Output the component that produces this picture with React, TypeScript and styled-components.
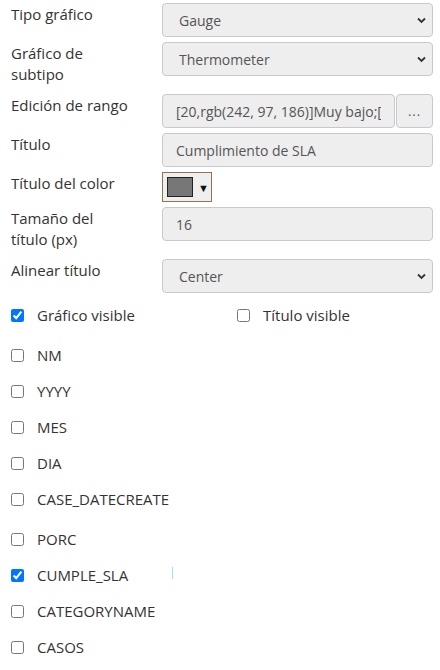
import { createGlobalStyle } from 'styled-components';
import styled from 'styled-components';

const GlobalStyle = createGlobalStyle`
  html, body {
    margin: 0;
    padding: 0;
    background: #fff;
  }
  body {
    font-family: 'Open Sans', 'Noto Sans', sans-serif;
    font-size: 15px;
    color: #333;
  }
  * { box-sizing: border-box; }
`;

const Panel = styled.div`
  width: 440px;
  padding: 3px 7px 0 11px;
`;

const Row = styled.div`
  display: flex;
  align-items: flex-start;
`;

const Label = styled.div`
  width: 151px;
  flex-shrink: 0;
  font-size: 15px;
  line-height: 21px;
  padding: 1px 30px 9px 0;
  color: #333;
`;

const Control = styled.div`
  flex: 1;
  display: flex;
  padding-bottom: 5px;
`;

const fieldBase = `
  height: 34px;
  border: 1px solid #c6cacd;
  border-radius: 4px;
  background: #eee;
  font-family: 'Open Sans', 'Noto Sans', sans-serif;
  font-size: 14px;
  color: #555;
  outline: none;
`;

const SelectWrap = styled.div`
  position: relative;
  flex: 1;
`;

const Select = styled.select`
  ${fieldBase}
  width: 100%;
  appearance: none;
  padding: 0 30px 0 16px;
`;

const Chevron = styled.svg`
  position: absolute;
  right: 7px;
  top: 14px;
  width: 9px;
  height: 7px;
  pointer-events: none;
`;

const TextInput = styled.input<{ $joined?: boolean }>`
  ${fieldBase}
  flex: 1;
  min-width: 0;
  padding: 0 13px;
  margin-right: ${(p) => (p.$joined ? '1px' : '0')};
`;

const DotsButton = styled.button`
  ${fieldBase}
  width: 37px;
  padding: 0;
  color: #555;
  font-size: 13px;
  letter-spacing: 1px;
`;

const ColorPicker = styled.div`
  width: 50px;
  height: 30px;
  border: 1px solid #94714f;
  background: #efefef;
  display: flex;
  align-items: center;
  padding-left: 4px;
  gap: 5px;
`;

const Swatch = styled.div<{ $color: string }>`
  width: 26px;
  height: 20px;
  border: 1px solid #222;
  background: ${(p) => p.$color};
`;

const Arrow = styled.span`
  font-size: 11px;
  color: #111;
  line-height: 1;
`;

const CheckGrid = styled.div`
  display: grid;
  grid-template-columns: 226px 1fr;
  padding-top: 4px;
  margin-bottom: 14px;
`;

const CheckItem = styled.label`
  position: relative;
  display: flex;
  align-items: center;
  height: 26px;
  font-size: 15px;
  color: #333;
`;

const Box = styled.input`
  width: 13px;
  height: 13px;
  margin: 0 13px 0 0;
  accent-color: #0075ff;
`;

const Group = styled.div`
  display: flex;
  flex-direction: column;
  gap: 10px;
  margin-bottom: 14px;
`;

const Caret = styled.span`
  position: absolute;
  left: 161px;
  top: 5px;
  width: 1px;
  height: 12px;
  background: #a6dcff;
`;

function Dropdown({ value, options }: { value: string; options: string[] }) {
  return (
    <SelectWrap>
      <Select defaultValue={value}>
        {options.map((o) => (
          <option key={o}>{o}</option>
        ))}
      </Select>
      <Chevron viewBox="0 0 9 7">
        <path d="M1 1.5 L4.5 5 L8 1.5" fill="none" stroke="#333" strokeWidth="1.8" />
      </Chevron>
    </SelectWrap>
  );
}

const fieldsA = ['NM', 'YYYY', 'MES', 'DIA', 'CASE_DATECREATE'];
const fieldsB = ['PORC', 'CUMPLE_SLA', 'CATEGORYNAME', 'CASOS'];

export default function App() {
  return (
    <>
      <GlobalStyle />
      <Panel>
        <Row>
          <Label>Tipo gráfico</Label>
          <Control>
            <Dropdown value="Gauge" options={['Gauge', 'Bar', 'Line', 'Pie']} />
          </Control>
        </Row>
        <Row>
          <Label>Gráfico de subtipo</Label>
          <Control>
            <Dropdown value="Thermometer" options={['Thermometer', 'Radial', 'Linear']} />
          </Control>
        </Row>
        <Row>
          <Label>Edición de rango</Label>
          <Control>
            <TextInput
              $joined
              readOnly
              value="[20,rgb(242, 97, 186)]Muy bajo;[50,rgb(255, 193, 7)]Bajo"
            />
            <DotsButton>...</DotsButton>
          </Control>
        </Row>
        <Row>
          <Label>Título</Label>
          <Control>
            <TextInput readOnly value="Cumplimiento de SLA" />
          </Control>
        </Row>
        <Row>
          <Label>Título del color</Label>
          <Control>
            <ColorPicker>
              <Swatch $color="#777" />
              <Arrow>▼</Arrow>
            </ColorPicker>
          </Control>
        </Row>
        <Row>
          <Label>Tamaño del título (px)</Label>
          <Control>
            <TextInput readOnly value="16" />
          </Control>
        </Row>
        <Row>
          <Label>Alinear título</Label>
          <Control>
            <Dropdown value="Center" options={['Left', 'Center', 'Right']} />
          </Control>
        </Row>

        <CheckGrid>
          <CheckItem>
            <Box type="checkbox" defaultChecked />
            Gráfico visible
          </CheckItem>
          <CheckItem>
            <Box type="checkbox" />
            Título visible
          </CheckItem>
        </CheckGrid>

        <Group>
          {fieldsA.map((f) => (
            <CheckItem key={f}>
              <Box type="checkbox" />
              {f}
            </CheckItem>
          ))}
        </Group>
        <Group>
          {fieldsB.map((f) => (
            <CheckItem key={f}>
              <Box type="checkbox" defaultChecked={f === 'CUMPLE_SLA'} />
              {f}
              {f === 'CUMPLE_SLA' && <Caret />}
            </CheckItem>
          ))}
        </Group>
      </Panel>
    </>
  );
}
